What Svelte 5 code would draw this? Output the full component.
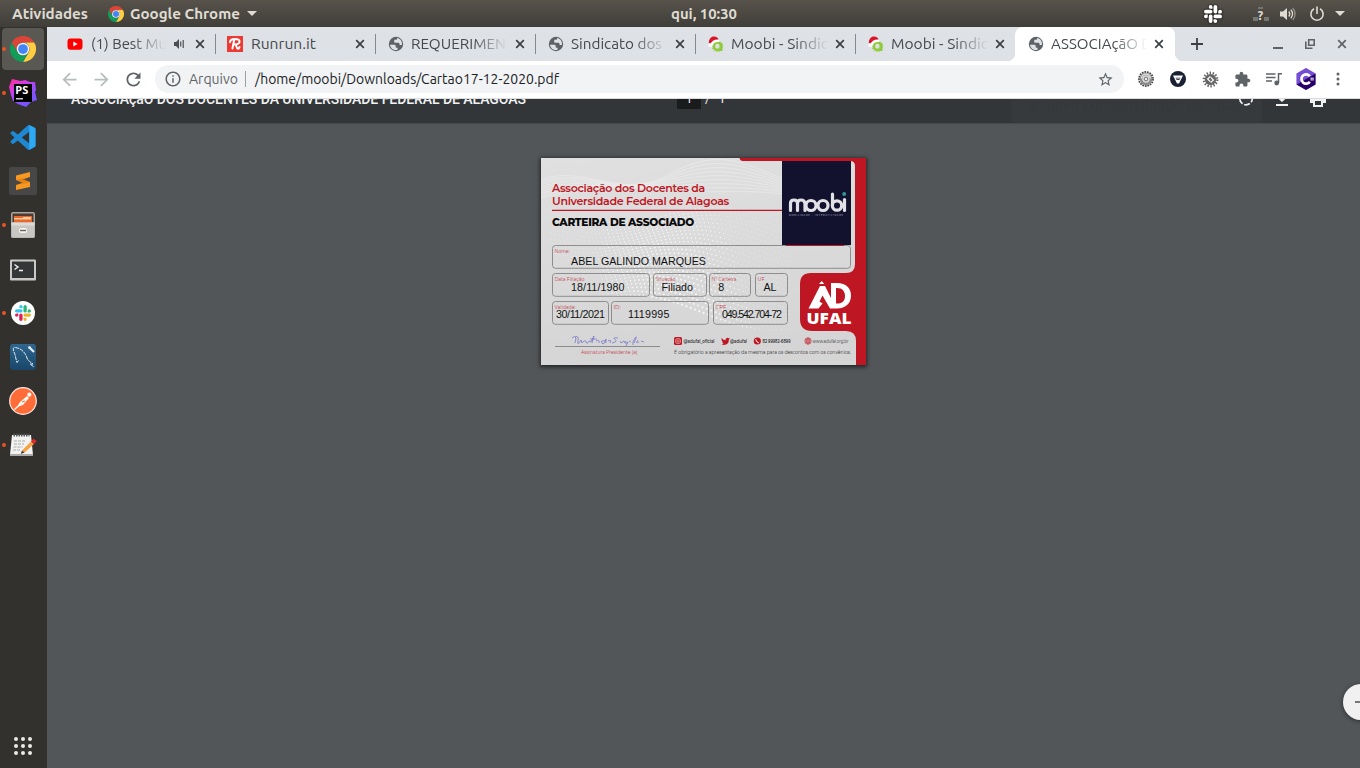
<script>
  const tabs = [
    { icon: 'youtube', title: '(1) Best Mu', w: 76, clip: 75, audio: true },
    { icon: 'runrun', title: 'Runrun.it', w: 65, clip: 96 },
    { icon: 'globe', title: 'REQUERIMEN', w: 95, clip: 96 },
    { icon: 'globe', title: 'Sindicato dos', w: 91, clip: 96 },
    { icon: 'moobi', title: 'Moobi - Sindic', w: 97, clip: 97 },
    { icon: 'moobi', title: 'Moobi - Sindic', w: 97, clip: 97 },
    { icon: 'globe', title: 'ASSOCIAçãO D', w: 101, clip: 96, active: true }
  ];
  const dock = [
    { name: 'chrome', run: true, active: true },
    { name: 'phpstorm', run: true },
    { name: 'vscode' },
    { name: 'sublime' },
    { name: 'files', run: true },
    { name: 'terminal' },
    { name: 'slack', run: true },
    { name: 'mysql' },
    { name: 'postman' },
    { name: 'notes', run: true }
  ];
  const fields = [
    { x: 552.5, y: 245.5, w: 298, label: 'Nome:', lw: 15, value: 'ABEL GALINDO MARQUES', vx: 571, vw: 135, vy: 265 },
    { x: 552.5, y: 273.5, w: 97, label: 'Data Filiação', lw: 30, value: '18/11/1980', vx: 571, vw: 53.5, vy: 291 },
    { x: 653.5, y: 273.5, w: 53, label: 'Situação', lw: 20, value: 'Filiado', vx: 661.5, vw: 31.5, vy: 291 },
    { x: 709.5, y: 273.5, w: 41, label: 'N° Carteira', lw: 25, value: '8', vx: 718.3, vw: 6, vy: 291 },
    { x: 755.5, y: 273.5, w: 32, label: 'UF', lw: 7, value: 'AL', vx: 763.5, vw: 13, vy: 291 },
    { x: 552.5, y: 301.5, w: 56, label: 'Validade:', lw: 21, value: '30/11/2021', vx: 556, vw: 49, vy: 318 },
    { x: 611.5, y: 301.5, w: 97, label: 'ID:', lw: 7, value: '1119995', vx: 628, vw: 41.5, vy: 318 },
    { x: 713.5, y: 301.5, w: 74, label: 'CPF', lw: 11, value: '049.542.704-72', vx: 722, vw: 60, vy: 318 }
  ];
  const dots = [];
  for (let r = 0; r < 24; r++) {
    for (let c = 0; c < 62; c++) {
      const x = 545 + c * 4.3 + r * 1.1;
      const y = 205 + r * 4.2 + Math.sin(c / 9 + r / 8) * 12 + c * 0.35;
      if (y < 336 && x < 790 && y > 203 && (x > 600 || y < 262)) {
        dots.push([x, y, 0.35 + 0.5 * Math.max(0, Math.sin(c / 12 - 0.6)) * (r / 24 + 0.3)]);
      }
    }
  }
  const waves = Array.from({ length: 9 }, (_, i) =>
    `M541 ${180 + i * 2.2}C585 ${163 + i * 3} 620 ${202 - i * 2} 670 ${174 + i * 2}S745 ${165 + i * 3} 782 ${178 + i * 2}`);
</script>

{#snippet fit(text, w, size, weight, h, base)}
  <svg class="fit" width={w + 1} height={h} aria-label={text}>
    <text x="0" y={base} font-size={size} font-weight={weight} textLength={w} lengthAdjust="spacingAndGlyphs" fill="currentColor">{text}</text>
  </svg>
{/snippet}

{#snippet chrome(s)}
  <svg width={s} height={s} viewBox="0 0 48 48">
    <path fill="#db4437" d="M3.2 12A24 24 0 0 1 44.8 12H24A12 12 0 0 0 13.6 30z" />
    <path fill="#ffcd40" d="M44.8 12A24 24 0 0 1 24 48L34.4 30A12 12 0 0 0 24 12z" />
    <path fill="#0f9d58" d="M3.2 12A24 24 0 0 0 24 48L34.4 30A12 12 0 0 1 13.6 30z" />
    <circle cx="24" cy="24" r="11.6" fill="#f1f1f1" /><circle cx="24" cy="24" r="9" fill="#4285f4" />
  </svg>
{/snippet}

{#snippet slackMark(s, colors)}
  <svg width={s} height={s} viewBox="0 0 24 24">
    {#each colors as c, i}
      <path transform={`rotate(${i * 90} 12 12)`} fill={c} d="M5.04 15.17A2.52 2.52 0 1 1 2.52 12.64h2.52zM6.31 15.17a2.52 2.52 0 0 1 5.04 0v6.31a2.52 2.52 0 0 1-5.04 0z" />
    {/each}
  </svg>
{/snippet}

{#snippet favicon(name)}
  {#if name === 'youtube'}
    <svg width="16" height="16" viewBox="0 0 16 16"><rect x=".5" y="2.5" width="15" height="11.3" rx="3" fill="#f00" /><path d="M6.3 5.6v5l4.2-2.5z" fill="#fff" /></svg>
  {:else if name === 'runrun'}
    <svg width="16" height="16" viewBox="0 0 16 16"><path fill="#ee3a34" d="M0 0h16v16H0z" /><path d="M3 6.2C3.2 3.8 5.5 3 8 3c3 0 4.8.8 4.5 2.8C12.2 7.7 10 8.4 7.5 8.4M7.3 3.2 5.4 12.5M8.8 8.4c.8 1.5.8 4.300 2 4.300.9 0 1.500-.7 1.700-1.700" fill="none" stroke="#fff" stroke-width="2" stroke-linecap="round" /></svg>
  {:else if name === 'globe'}
    <svg class="globe" width="16" height="16" viewBox="0 0 16 16">
      <circle cx="8" cy="8" r="7.200" fill="#5f6368" />
      <path d="M2 8.700h3.800c1.400 0 2 .7 2 1.700v1.300H9.500v2.300c-3.800.7-7-1.700-7.500-5.300z" fill="#dee1e6" />
      <path d="M9.300 2c0 1.300-.8 1.800-2 1.800-.9 0-1.200.6-1.200 1.700 0 .9.600 1.200 1.700 1.200h2.400c1.300 0 1.400.9 1.400 2.200h2.300C14.500 5.500 12.500 2.700 9.300 2z" fill="#dee1e6" />
    </svg>
  {:else}
    <svg class="moo" width="16" height="16" viewBox="0 0 16 16">
      <circle cx="9.5" cy="10.3" r="3.7" fill="none" stroke="#8fcc3d" stroke-width="2.500" /><path d="M11.500 7v8h3V7z" fill="#8fcc3d" /><circle cx="9.300" cy="10.500" r="5.300" fill="none" stroke="#8fcc3d" stroke-dasharray="1.200 1.500" />
      <path d="M.8 7C.8 3 3 .5 6 .5c2.600.1 4.200 1.300 4.800 3.500C8 4 5 5.500 3.300 8z" fill="#d8142a" />
      <path d="M3.500 9C4.300 6.500 7 4.600 10.500 4.800" stroke="#fff" stroke-width="2.400" fill="none" stroke-linecap="round" /><circle cx="2.300" cy="9.300" r="2" fill="#fafafa" />
    </svg>
  {/if}
{/snippet}

{#snippet dockIcon(name)}
  {#if name === 'chrome'}
    {@render chrome(26)}
  {:else if name === 'phpstorm'}
    <svg width="30" height="30" viewBox="0 0 30 30">
      <defs><linearGradient id="ps" x1="0" y1="0" x2=".7" y2="1"><stop offset="0" stop-color="#ff318c" /><stop offset=".35" stop-color="#d63ce8" /><stop offset=".6" stop-color="#9b4dff" /><stop offset="1" stop-color="#6b57ff" /></linearGradient></defs>
      <path fill="url(#ps)" d="m4 1 9 2 4-1 5 2 5 0 1 8-1 2 2 8-6 2-5 5-8-3-5-3-2-6-2-8z" />
      <path fill="#000" d="M6 6h18v18H6z" /><text x="7.300" y="15.500" font-family="Noto Sans, Liberation Sans" font-weight="700" font-size="10" textLength="13" lengthAdjust="spacingAndGlyphs" fill="#fff">PS</text><path fill="#ccc" d="M8 20h7v1.500H8z" />
    </svg>
  {:else if name === 'vscode'}
    <svg width="26" height="25" viewBox="0 0 24 24">
      <path fill="#1e88d2" d="M23.150 2.587 18.210.21a1.494 1.494 0 0 0-1.705.29l-9.460 8.630-4.120-3.128a1 1 0 0 0-1.276.057L.327 7.261A1 1 0 0 0 .326 8.740L3.899 12 .326 15.260a1 1 0 0 0 .001 1.479L1.650 17.940a1 1 0 0 0 1.276.057l4.120-3.128 9.460 8.630a1.492 1.492 0 0 0 1.704.29l4.942-2.377A1.500 1.500 0 0 0 24 20.060V3.939a1.500 1.500 0 0 0-.85-1.352zM18.004 17.448 10.826 12l7.178-5.448z" />
      <path fill="#2fa8f4" d="M18.004 0 23.150 2.587A1.500 1.500 0 0 1 24 3.939V20.060L18.004 24z" />
    </svg>
  {:else if name === 'sublime'}
    <svg width="28" height="28" viewBox="0 0 28 28"><rect width="28" height="28" rx="2" fill="#474747" /><path fill="#f89820" d="M21 5v5l-7.500 2.500L21 15v5L7 23v-5l7-2.200L7 13V8.500z" /><path fill="#d37312" d="m7 13 7-2 7 4-6.500 2z" opacity=".5" /></svg>
  {:else if name === 'files'}
    <svg width="26" height="28" viewBox="0 0 26 28"><rect x="1" y="1" width="24" height="26" rx="2" fill="#a9a7a3" /><path fill="#50392e" d="M2.500 2.500h21v9h-21z" /><path fill="#e9682c" d="M4 5h18v7H4z" /><path fill="#f3c9a0" d="M4 7h9V6h8v2.500H4z" /><path fill="#c9c7c4" d="M1.500 11.500h23v15h-23z" /><path fill="#dddbd8" d="M1.500 11.500h23v3h-23z" /><rect x="9" y="17" width="8" height="5" rx="2" fill="#f4f4f4" /><path d="M10 18.800h6v1.400h-6z" fill="#68625c" /></svg>
  {:else if name === 'terminal'}
    <svg class="down" width="28" height="24" viewBox="0 0 28 24"><rect x="1" y="1.500" width="26" height="21" rx="1" fill="#c9c9c7" /><path fill="#353637" d="M3 3.500h22v16.500H3z" /><path d="m5.500 6.500 3.500 2.500-3.500 2.500M10 12.500h4" fill="none" stroke="#f1f1f1" stroke-width="1.400" /></svg>
  {:else if name === 'slack'}
    <span class="slackbg">{@render slackMark(16, ['#e01e5a', '#36c5f0', '#2eb67d', '#ecb22e'])}</span>
  {:else if name === 'mysql'}
    <svg width="28" height="28" viewBox="0 0 28 28"><defs><linearGradient id="my" x2="0" y2="1"><stop stop-color="#2f668f" /><stop offset="1" stop-color="#194669" /></linearGradient></defs><rect x="1" y="1" width="26" height="26" rx="3" fill="url(#my)" /><path d="M9.500 17.500 8 19.500C6.500 15 6.500 12 5 9 4 7 4 4.500 5.500 4.500 12 5 16 9 18 15c1 3 3 3.500 6 6l-3 0 4 3" fill="none" stroke="#e6edf3" stroke-width="1" stroke-dasharray="4 .8" /><path d="m20 4 5 5" stroke="#e6edf3" stroke-width="2.200" /><circle cx="20.500" cy="4.500" r="1.300" fill="#e6edf3" /></svg>
  {:else if name === 'postman'}
    <svg width="28" height="28" viewBox="0 0 28 28"><circle cx="14" cy="14" r="13.300" fill="#ff6c37" stroke="#fbe9e1" stroke-width="1.200" /><path d="m8 20 3-5 7-6 2 2-6 7z" fill="#fff4ee" /><path d="m5.500 22.500 6-5.500" stroke="#fff" stroke-width="1.200" /><circle cx="20.300" cy="7.700" r="2.100" fill="#fff4ee" /><path d="m13 15 3-1" stroke="#ff6c37" /></svg>
  {:else}
    <svg width="28" height="26" viewBox="0 0 28 26"><path fill="#f2f2f0" d="M3 3h19l2 20H1z" /><path fill="#aaa" d="M1 22h23v2H1z" /><path d="M4.500 3h16" stroke="#555" stroke-width="3" stroke-dasharray="1.500 1" /><path d="M5 9h12M5 12h10M4.500 15h9M4 18h7" stroke="#aaa" stroke-dasharray="3 1" /><path d="m13 18.500 9-9 3 2.500-9.500 8.500z" fill="#f5a243" /><path d="m22 9.500 2.500-2.800 3.300 2.300L25 12z" fill="#e4282c" /><path d="m13 18.500-1.300 3.500 3.800-1.500z" fill="#44382d" /></svg>
  {/if}
{/snippet}

{#snippet ic(s, d)}
  <svg width={s} height={s} viewBox="0 0 24 24"><path fill="currentColor" {d} /></svg>
{/snippet}

{#snippet cross()}
  <svg width="10" height="10" viewBox="0 0 10 10"><path d="m1.200 1.200 7.600 7.600m0-7.600L1.200 8.800" stroke="currentColor" stroke-width="1.700" /></svg>
{/snippet}

<div class="screen">
  <header class="topbar">
    <div class="left">
      {@render fit('Atividades', 76, 14, 700, 20, 15)}
      <span class="app">{@render chrome(16)}{@render fit('Google Chrome', 110, 14, 700, 20, 15)}<i class="caret"></i></span>
    </div>
    <div class="clock">{@render fit('qui, 10:30', 66, 14, 700, 20, 15)}</div>
    <div class="tray">
      <span class="tslack">{@render slackMark(18, ['#fff', '#fff', '#fff', '#fff'])}</span>
      <svg class="net" width="16" height="16" viewBox="0 0 16 16"><path fill="#77756f" d="M0 11h5v4H0zM11 11h5v4h-5zM5 1h5v2H5z" /><text x="4.500" y="13.500" font-size="13" font-weight="700" fill="#dfdbd2">?</text></svg>
      <svg class="vol" width="16" height="16" viewBox="0 0 16 16"><path fill="#dfdbd2" d="M0 5.500h3L7 2v12l-4-3.500H0z" /><path d="M8.800 5.500q2 2.500 0 5M10.800 3.700q3.500 4.300 0 8.600" fill="none" stroke="#dfdbd2" stroke-width="1.300" /><path d="M12.800 2q4.500 6 0 12" fill="none" stroke="#918f88" stroke-width="1.300" /></svg>
      <svg class="pow" width="16" height="16" viewBox="0 0 16 16"><path d="M5 2.800a6.100 6.100 0 1 0 6 0M8 .5V8" fill="none" stroke="#dfdbd2" stroke-width="1.600" /></svg>
      <i class="caret"></i>
    </div>
  </header>

  <div class="body">
    <nav class="dock">
      {#each dock as d}
        <div class="slot" class:active={d.active}>
          {#if d.run}<i class="dot"></i>{/if}
          {@render dockIcon(d.name)}
        </div>
      {/each}
      <div class="grid9">{#each Array(9) as _}<i></i>{/each}</div>
    </nav>

    <main class="browser">
      <div class="tabs">
        {#each tabs as t, i}
          <div class="tab" class:active={t.active} class:nosep={t.active || i === 5}>
            <span class="fav">{@render favicon(t.icon)}</span>
            <span class="title" class:long={t.w > 70} style:width={`${t.clip}px`}>{@render fit(t.title, t.w, 14.5, 400, 20, 15)}</span>
            {#if t.audio}
              <svg class="audio" width="11" height="12" viewBox="0 0 11 12"><path fill="#4c4f53" d="M0 4h2l3-3v10L2 8H0z" /><path d="M6.700 3.500v5M9.200 2v8" stroke="#4c4f53" stroke-width="1.200" /></svg>
            {/if}
            <span class="x">{@render cross()}</span>
          </div>
        {/each}
        <svg class="plus" width="12" height="12" viewBox="0 0 12 12"><path d="M6 0v12M0 6h12" stroke="#3c4043" stroke-width="1.800" /></svg>
        <div class="wins">
          <svg width="10" height="10"><path d="M0 9h10" stroke="#5f6368" stroke-width="2" /></svg>
          <svg width="10" height="10" viewBox="0 0 10 10"><path d="M3.700.8h5.500v5.500H3.700zM.8 2.500v6.700h6.700" fill="none" stroke="#5f6368" stroke-width="1.600" /></svg>
          <span>{@render cross()}</span>
        </div>
      </div>

      <div class="toolbar">
        <span class="nav dim">{@render ic(21, 'M20 11H7.830l5.590-5.590L12 4l-8 8 8 8 1.410-1.410L7.830 13H20v-2z')}</span>
        <span class="nav dim">{@render ic(21, 'M12 4l-1.410 1.410L16.170 11H4v2h12.170l-5.580 5.590L12 20l8-8z')}</span>
        <span class="nav">{@render ic(21, 'M17.650 6.350C16.200 4.900 14.210 4 12 4c-4.420 0-7.990 3.580-7.990 8s3.570 8 7.990 8c3.730 0 6.840-2.550 7.730-6h-2.080c-.82 2.330-3.040 4-5.650 4-3.310 0-6-2.690-6-6s2.690-6 6-6c1.660 0 3.140.69 4.220 1.780L13 11h7V4l-2.350 2.350z')}</span>
        <div class="omni">
          <span class="info">{@render ic(18, 'M11 17h2v-6h-2v6zm1-15C6.480 2 2 6.480 2 12s4.480 10 10 10 10-4.480 10-10S17.520 2 12 2zm0 18c-4.410 0-8-3.590-8-8s3.590-8 8-8 8 3.590 8 8-3.590 8-8 8zM11 9h2V7h-2v2z')}</span>
          <span class="scheme">{@render fit('Arquivo', 49, 14, 400, 20, 15)}</span>
          <i class="bar"></i>
          <span class="url">{@render fit('/home/moobi/Downloads/Cartao17-12-2020.pdf', 304, 14, 400, 20, 15)}</span>
          <span class="star">{@render ic(17, 'M22 9.240l-7.190-.62L12 2 9.190 8.630 2 9.240l5.460 4.730L5.820 21 12 17.270 18.180 21l-1.630-7.030L22 9.240zM12 15.400l-3.760 2.270 1-4.280-3.320-2.880 4.380-.38L12 6.100l1.710 4.040 4.380.38-3.320 2.880 1 4.280L12 15.400z')}</span>
        </div>
        <div class="exts">
          <span><svg width="16" height="16" viewBox="0 0 16 16"><circle cx="8" cy="8" r="7" fill="none" stroke="#444" stroke-width="1.800" stroke-dasharray="1.700 .9" /><circle cx="8" cy="8" r="5" fill="#dcdcdc" stroke="#8b8b8b" stroke-width="2.600" /><path d="M3.500 7.500a4.500 4.500 0 0 1 9 0" fill="none" stroke="#ddd" stroke-width="1.300" /><circle cx="8" cy="8" r="1.800" fill="#eee" stroke="#555" stroke-width=".8" /></svg></span>
          <span><svg width="16" height="16" viewBox="0 0 16 16"><circle cx="8" cy="8" r="8" fill="#192133" /><path d="M3 4.500h10L9 12.500H7z" fill="#fff" /><path d="M5.500 6.700h5L9.300 9H6.700z" fill="#192133" /><path d="M6.200 7.700h3.600" stroke="#fff" stroke-width=".7" /></svg></span>
          <span><svg width="17" height="17" viewBox="0 0 17 17"><circle cx="8.500" cy="8.500" r="6.600" fill="none" stroke="#666" stroke-width="2.600" stroke-dasharray="1.400 1.600" /><circle cx="8.500" cy="8.500" r="5.600" fill="#666" /><path d="M8.300 5.300 5.600 8l2.700 2.700M8.700 6.300l2.700 2.700-2.700 2.700" fill="none" stroke="#fff" stroke-width="1.200" /></svg></span>
          <span>{@render ic(17, 'M20.500 11H19V7c0-1.100-.9-2-2-2h-4V3.500C13 2.120 11.880 1 10.500 1S8 2.120 8 3.500V5H4c-1.100 0-1.990.9-1.990 2v3.800H3.500c1.490 0 2.700 1.210 2.700 2.700s-1.210 2.700-2.700 2.700H2V20c0 1.100.9 2 2 2h3.800v-1.500c0-1.490 1.210-2.700 2.700-2.700 1.490 0 2.700 1.210 2.700 2.700V22H17c1.100 0 2-.9 2-2v-4h1.500c1.380 0 2.500-1.120 2.500-2.500S21.880 11 20.500 11z')}</span>
          <span><svg width="16" height="14" viewBox="0 0 16 14"><path d="M0 2h9.500M0 5.500h9.500M0 9h6M12.500 11V1.800H16" fill="none" stroke="#5f6368" stroke-width="1.500" /><circle cx="10.700" cy="11" r="2.400" fill="#5f6368" /></svg></span>
          <span><svg width="20" height="22" viewBox="0 0 20 22"><path fill="#8a62d8" d="m10 0 9.500 5.500v11L10 22 .5 16.500v-11z" /><path fill="#280068" d="m.5 16.500 19-11v11L10 22z" /><path fill="#512bd4" d="M.5 5.500 10 0l9.500 5.500L.5 16.500z" opacity=".35" /><path d="M13.800 8.300a4.600 4.600 0 1 0 0 5.400" fill="none" stroke="#fff" stroke-width="2.700" /><path d="M15.300 9.500v3M17 9.500v3M14.300 10.300h3.600M14.300 11.900h3.600" stroke="#fff" stroke-width=".6" /></svg></span>
          <span><svg width="4" height="14" viewBox="0 0 4 14"><g fill="#5f6368"><circle cx="2" cy="2" r="1.500" /><circle cx="2" cy="7" r="1.500" /><circle cx="2" cy="12" r="1.500" /></g></svg></span>
        </div>
      </div>

      <div class="pdfbar">
        <svg width="1313" height="24" viewBox="47 99 1313 24">
          <g font-family="Roboto" fill="#f1f1f1">
            <text x="71" y="104" font-size="14" font-weight="500" textLength="455">ASSOCIAçãO DOS DOCENTES DA UNIVERSIDADE FEDERAL DE ALAGOAS</text>
            <path d="M677 98h24v11h-24z" fill="#191b1c" />
            <text x="685.500" y="103" font-size="12.500">1</text><text x="705" y="103" font-size="12.500">/</text><text x="718.500" y="103" font-size="12.500">1</text>
          </g>
          <path d="M1011 98h251v21q0 4-4 4h-243q-4 0-4-4z" fill="#fff" opacity=".025" />
          <text x="1028" y="110" font-family="Ubuntu, Noto Sans" font-size="14" textLength="212" fill="#000" opacity=".035">arquivo compartilhado ou local</text>
          <path d="M1239.700 98.500a6 6 0 0 0 12.600 0" fill="none" stroke="#f1f1f1" stroke-width="1.700" stroke-dasharray="6 1.700" />
          <path d="M1277.500 98h9l-4.500 4zM1276 104h12v2h-12z" fill="#f1f1f1" />
          <path d="M1310 98h16v5h-3v4h-10v-4h-3z" fill="#f1f1f1" /><path d="M1315 101h6v4h-6z" fill="#323639" />
        </svg>
      </div>

      <section class="viewer">
        <svg class="card" width="325" height="207" viewBox="541 158 325 207">
          <defs><linearGradient id="paper" x1="0" y1="0" x2=".2" y2="1"><stop stop-color="#e0e0e1" /><stop offset="1" stop-color="#d5d5d6" /></linearGradient></defs>
          <path fill="url(#paper)" d="M541 158h325v207H541z" />
          <g stroke="#fff" fill="none" stroke-width=".7" opacity=".4">{#each waves as w}<path d={w} />{/each}</g>
          <g fill="#fff">{#each dots as [x, y, r]}<circle cx={x} cy={y} r={r + 0.15} opacity={r < 0.45 ? 0.45 : 0.75} />{/each}</g>
          <path fill="#be1622" d="M739.500 158H866v207H856V341Q856 331 846 331H812Q800 331 800 319V284Q800 273 811 273H846Q855 273 855 264V166Q855 161 850 161H743Q740 161 739.500 158z" />
          <g font-family="Montserrat, Inter" font-weight="600" fill="#be1622" font-size="11.500" letter-spacing="-.3">
            <text x="552" y="191.500" textLength="153" lengthAdjust="spacingAndGlyphs">Associação dos Docentes da</text>
            <text x="552" y="204.500" textLength="177" lengthAdjust="spacingAndGlyphs">Universidade Federal de Alagoas</text>
            <text x="552" y="226.300" font-weight="800" fill="#0a0a0a" font-size="11.300" textLength="142" lengthAdjust="spacingAndGlyphs">CARTEIRA DE ASSOCIADO</text>
          </g>
          <path fill="#be1622" d="M552 209.700h230v1.300H552z" />
          <path fill="#12122f" d="M782 161h69v84h-69z" />
          <g fill="none" stroke="#e2e2e6" stroke-width="3.200" stroke-linecap="round">
            <path d="M790.500 210.500v-7q0-3.500 3.500-3.500t3.500 3.500v7M797.500 203.500q0-3.500 3.500-3.500t4 3.500v7" />
            <circle cx="811" cy="205.500" r="5" /><circle cx="823" cy="205.500" r="5" /><path d="M832.500 194v11" /><circle cx="837" cy="205.500" r="4.700" /><path d="M844.500 199.500v11" />
          </g>
          <circle cx="844.200" cy="194" r="2" fill="#35948e" />
          <text x="789" y="215.500" font-family="Inter" font-size="2.400" fill="#aaaabc" textLength="54">MOBILIDADE - INTERATIVIDADE</text>
          {#each fields as f}
            <rect x={f.x} y={f.y} width={f.w} height="22.800" rx="3" fill="none" stroke="#858586" stroke-width=".9" />
            <text x={f.x + 2} y={f.y + 7} font-family="Montserrat, Inter" font-size="5.200" fill="#c5404a" textLength={f.lw} lengthAdjust="spacingAndGlyphs">{f.label}</text>
            <text x={f.vx} y={f.vy} font-family="Liberation Sans" font-size="10.700" fill="#111" textLength={f.vw}>{f.value}</text>
          {/each}
          <path d="M786 245.500h58" stroke="#be1622" />
          <g fill="#fff"><path fill-rule="evenodd" d="M808.500 308.500 820 286h5l6 12v-15h6c9 0 14 5 14 12.500S846 308.500 837 308.500h-7l-7.500-13-3 6 3 2-4 5zM836 288v15.500c6 .5 9-2.500 9-7.500s-3-8.500-9-8z" /><path d="m819 284 2.700-3 2.500 3z" />
            <text x="806.500" y="323.800" font-family="Open Sans, Inter" font-weight="800" font-size="16.500" textLength="45" lengthAdjust="spacingAndGlyphs">UFAL</text></g>
          <path d="M572 338q3-3 4 0l-1 5M575 337q4-2 3 4t3-1l1 3q3-4 4-1t3-1l2 1 3-6-2 7M590 339h7M596 341q4-2 3 2M605 341q-5-1-3 2t4-4l0 4M608 341q4-2 2 2M618 338q-6-1-3 1.500t-3 3.500M620 341l1 2 3-2 1 2M626 341q-2 4 2 1l-2 4M629 341l2 1M634 343q4-9 1-5t-2 7M638 340q-3 4 1 2M641 341l3 1" fill="none" stroke="#6a6ac4" stroke-width=".7" />
          <path d="M555 346.500h105" stroke="#777" stroke-width=".8" />
          <g font-family="Montserrat, Inter" font-size="5.300" fill="#333">
            <text x="581" y="353.500" fill="#c5404a" textLength="56.500" lengthAdjust="spacingAndGlyphs">Assinatura Presidente (a)</text>
            <text x="683.500" y="343" font-weight="600" font-size="4.600" textLength="31" lengthAdjust="spacingAndGlyphs">@adufal_oficial</text>
            <text x="730" y="343" font-weight="600" font-size="4.600" textLength="17" lengthAdjust="spacingAndGlyphs">@adufal</text>
            <text x="762.500" y="343" font-weight="600" font-size="4.600" textLength="28" lengthAdjust="spacingAndGlyphs">82 99982-6899</text>
            <text x="812.500" y="343" font-size="4.800" textLength="36" lengthAdjust="spacingAndGlyphs">www.adufal.org.br</text>
            <text x="674" y="353.500" textLength="177" lengthAdjust="spacingAndGlyphs">É obrigatório a apresentação da mesma para os descontos com os convênios.</text>
          </g>
          <rect x="674" y="337" width="8" height="8" rx="1.500" fill="#be1622" /><rect x="675.700" y="338.700" width="4.600" height="4.600" rx="1.200" fill="none" stroke="#e8c7c9" stroke-width=".7" /><circle cx="678" cy="341" r="1.100" fill="none" stroke="#e8c7c9" stroke-width=".6" />
          <path fill="#be1622" d="M721.500 338q2 2.200 4 2.200-.2-2.400 2-2.500l1.400.6 1-.2-1 1.500q0 5.400-5 5.400l-2.400-.8 2-.8-1.400-1.400.6-.1-1.300-1.700.7.1q-1-.9-.6-2.300z" />
          <circle cx="757.300" cy="341" r="3.600" fill="#be1622" /><path d="M755.700 339.300q.5 3 3.200 3.600" stroke="#fff" fill="none" />
          <g fill="none" stroke="#c5404a" stroke-width=".7"><circle cx="808" cy="341" r="3.200" /><ellipse cx="808" cy="341" rx="1.500" ry="3.200" /><path d="M804.800 341h6.400M808 337.800v6.400M805.300 339.300h5.400M805.300 342.700h5.400" /></g>
        </svg>
        <div class="zoom"><i></i></div>
      </section>
    </main>
  </div>
</div>

<style>
  :global(body) { margin: 0; overflow: hidden; }
  .screen { width: 1360px; height: 768px; overflow: hidden; display: flex; flex-direction: column; font-family: Ubuntu, "Noto Sans", sans-serif; background: #33312d; }
  svg { display: block; flex: none; }
  .fit { overflow: visible; }
  .topbar { height: 27px; flex: none; display: grid; grid-template-columns: 1fr auto 1fr; align-items: center; color: #dfdbd2; background: linear-gradient(#57534b, #403e39); }
  .left { display: flex; align-items: center; padding-left: 12px; gap: 19px; }
  .app { display: flex; align-items: center; gap: 6px; }
  .caret { border: 5px solid transparent; border-top-color: #dfdbd2; border-bottom: 0; }
  .clock { padding-left: 48px; }
  .tray { display: flex; align-items: center; justify-content: flex-end; padding-right: 15px; }
  .tslack { margin-right: 31px; filter: drop-shadow(0 0 1px #000); }
  .net { margin-right: 11px; }
  .vol { margin-right: 13px; }
  .pow { margin-right: 10px; }
  .body { flex: 1; display: flex; min-height: 0; }
  .dock { width: 47px; flex: none; display: flex; flex-direction: column; background: #33312d; }
  .slot { height: 44px; width: 46px; flex: none; display: flex; align-items: center; justify-content: center; position: relative; }
  .slot.active { height: 42px; width: 42px; margin: 1px 2px; border-radius: 4px; background: #5a5853; }
  .down { margin-top: 2px; }
  .dot { position: absolute; left: 2px; top: 20px; width: 4px; height: 4px; border-radius: 50%; background: #e95420; }
  .active .dot { left: 0; top: 19px; }
  .slackbg { width: 24px; height: 24px; border-radius: 50%; background: #fff; display: grid; place-items: center; }
  .grid9 { margin: auto auto 13px 14px; display: grid; grid-template-columns: repeat(3, 4px); gap: 3px; }
  .grid9 i { width: 4px; height: 4px; border-radius: 50%; background: #eceae6; }
  .browser { flex: 1; min-width: 0; display: flex; flex-direction: column; background: #525659; }
  .tabs { height: 34px; flex: none; display: flex; align-items: center; padding-left: 8px; background: #dee1e6; color: #45484c; }
  .tab { width: 160px; height: 34px; box-sizing: border-box; flex: none; display: flex; align-items: center; padding-left: 12px; position: relative; }
  .tab::after { content: ""; position: absolute; right: -1px; top: 7px; width: 1px; height: 20px; background: #86898d; }
  .tab.nosep::after { display: none; }
  .tab.active { background: #fff; border-radius: 8px 8px 0 0; }
  .tab.active::before { content: ""; position: absolute; left: -8px; right: -8px; bottom: 0; height: 8px; background: radial-gradient(circle at 0 0, transparent 8px, #fff 8.500px) 0 0 / 8px 8px no-repeat, radial-gradient(circle at 100% 0, transparent 8px, #fff 8.500px) 100% 0 / 8px 8px no-repeat; }
  .fav { width: 24px; flex: none; }
  .globe, .moo { margin-left: .5px; }
  .title { flex: none; overflow: hidden; }
  .title.long { -webkit-mask-image: linear-gradient(90deg, #000 calc(100% - 34px), transparent); mask-image: linear-gradient(90deg, #000 calc(100% - 34px), transparent); }
  .audio { margin-left: 8px; }
  .x { margin-left: auto; padding-right: 10px; color: #3c4043; }
  .active .x { padding-right: 11px; }
  .plus { margin-left: 16px; }
  .wins { margin-left: auto; display: flex; align-items: center; gap: 22px; padding-right: 13px; color: #5f6368; }
  .toolbar { height: 36px; flex: none; display: flex; align-items: center; padding: 0 0 1px 6px; background: #fff; border-bottom: 1px solid #dadce0; color: #5f6368; }
  .nav { width: 32px; display: grid; place-items: center; }
  .nav.dim { color: #babcbe; }
  .omni { width: 969px; height: 28px; box-sizing: border-box; margin-left: 6px; border-radius: 14px; background: #f1f3f4; display: flex; align-items: center; padding: 0 10px 0 9px; }
  .info { width: 25px; }
  .bar { width: 1px; height: 16px; margin: 0 9px 0 6px; background: #9aa0a6; }
  .url { color: #202124; }
  .star { margin-left: auto; }
  .exts { display: flex; padding-left: 6px; }
  .exts span { width: 32px; display: grid; place-items: center; }
  .pdfbar { height: 24px; flex: none; overflow: hidden; background: #323639; box-shadow: 0 1px 1px #474b4e; }
  .viewer { flex: 1; min-height: 0; position: relative; padding: 35px 0 0 494px; }
  .card { box-shadow: 0 1px 4px 1px rgba(0, 0, 0, .6); }
  .zoom { position: absolute; left: 1296px; top: 561px; width: 36px; height: 36px; border-radius: 50%; background: #f1f1f1; box-shadow: 0 1px 4px rgba(0, 0, 0, .5); display: flex; align-items: center; padding-left: 12px; box-sizing: border-box; }
  .zoom i { width: 12px; height: 2px; background: #777; }
</style>
